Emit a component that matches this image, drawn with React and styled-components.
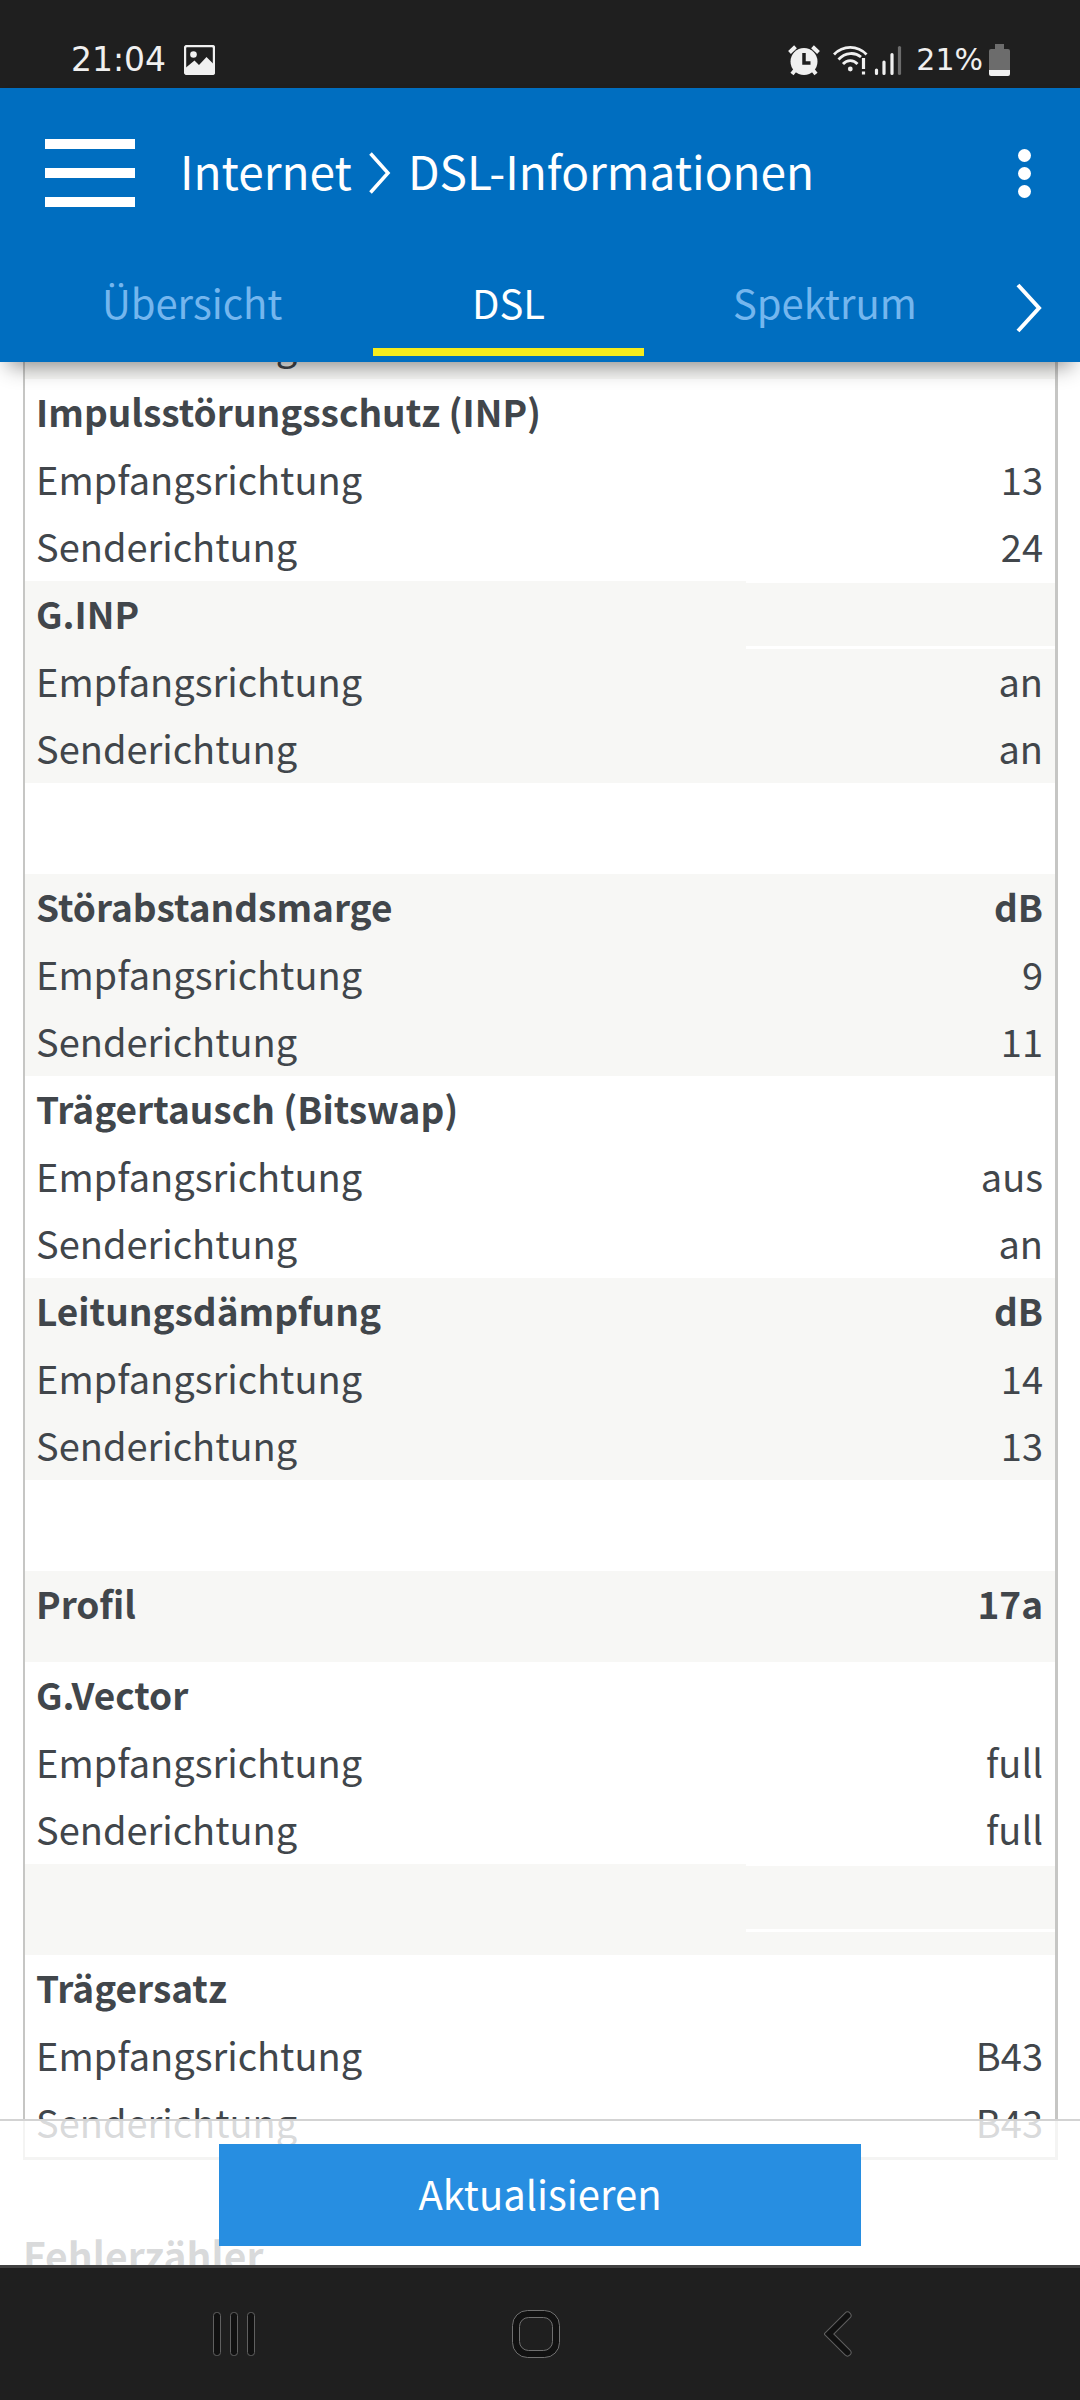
import { useLayoutEffect, useRef } from "react";
import styled, { createGlobalStyle } from "styled-components";

const GlobalStyle = createGlobalStyle`
  * {
    box-sizing: border-box;
  }

  body {
    margin: 0;
    background: #fff;
    color: #41464b;
    font-family: "Noto Sans CJK SC", "Noto Sans", sans-serif;
    font-size: 38px;
  }

  button {
    font: inherit;
    color: inherit;
    border: none;
    background: none;
    padding: 0;
    cursor: pointer;
  }
`;

const Screen = styled.div`
  display: flex;
  flex-direction: column;
  height: 100vh;
`;

// Android status bar
const StatusBar = styled.div`
  display: flex;
  justify-content: space-between;
  align-items: flex-end;
  flex-shrink: 0;
  height: 88px;
  padding: 0 70px 12px 71px;
  background: #1f1f1f;
  color: #f0f0f0;
  font-family: "DejaVu Sans", sans-serif;
  line-height: 32px;
`;

const StatusGroup = styled.div`
  display: flex;
  align-items: center;
  gap: ${(props) => props.$gap};
`;

const Clock = styled.span`
  font-size: 33px;
`;

const BatteryLevel = styled.span`
  font-size: 30px;
`;

const Header = styled.header`
  position: relative;
  z-index: 1;
  flex-shrink: 0;
  background: #006ec0;
  color: #fff;
  box-shadow: 0 12px 20px -8px rgba(0, 0, 0, 0.45);
`;

const TitleRow = styled.div`
  display: flex;
  align-items: center;
  height: 170px;
  padding: 0 49px 0 45px;
`;

const MenuButton = styled.button`
  display: flex;
  flex-direction: column;
  gap: 19px;
  width: 90px;
  margin-right: 45px;
`;

const MenuBar = styled.span`
  height: 10px;
  background: #fff;
`;

const Title = styled.h1`
  display: flex;
  align-items: center;
  gap: 17px;
  flex: 1;
  margin: 0;
  font-size: 46px;
  font-weight: 400;
  line-height: 64px;
`;

const TitleText = styled.span`
  padding-bottom: 6px;
`;

const MoreButton = styled.button`
  display: flex;
  flex-direction: column;
  gap: 5px;
`;

const Dot = styled.span`
  width: 13px;
  height: 13px;
  border-radius: 50%;
  background: #fff;
`;

const TabRow = styled.nav`
  display: flex;
  align-items: flex-end;
  height: 104px;
  padding: 0 38px 6px 34px;
`;

const Tab = styled.a`
  flex: 1;
  margin: 0 23px;
  padding-bottom: 16px;
  border-bottom: 8px solid ${(props) => (props.$active ? "#f5ec1e" : "transparent")};
  color: ${(props) => (props.$active ? "#fff" : "#74b6ee")};
  font-size: 40px;
  line-height: 60px;
  text-align: center;
  text-decoration: none;
`;

const NextButton = styled.button`
  display: flex;
  margin: 0 0 23px 33px;
`;

const Body = styled.div`
  position: relative;
  flex: 1;
  min-height: 0;
`;

const Scroller = styled.main`
  height: 100%;
  padding: 0 22px 180px 23px;
  overflow-y: auto;
  scrollbar-width: none;
`;

const Table = styled.table`
  width: 100%;
  border: 3px solid #c6c6c4;
  border-top: none;
  border-left-width: 2px;
  border-spacing: 0;
  table-layout: fixed;
`;

const Group = styled.tbody`
  background: ${(props) => (props.$shaded ? "#f7f7f5" : "#fff")};
`;

const Label = styled.th`
  width: 70%;
  height: ${(props) => props.$height};
  padding: 0 11px;
  font-size: ${(props) => (props.$bold ? "37px" : "38px")};
  font-weight: ${(props) => (props.$bold ? 600 : 400)};
  line-height: 64px;
  text-align: left;
  vertical-align: top;
`;

const Value = styled.td`
  padding: 0;
  font-size: ${(props) => (props.$bold ? "37px" : "38px")};
  font-weight: ${(props) => (props.$bold ? 600 : 400)};
  line-height: 64px;
  text-align: right;
  vertical-align: top;
`;

const ValueText = styled.div`
  padding: 0 12px;
`;

// Empty value that keeps its white lines above and below
const BlankValue = styled.div`
  height: 68px;
  border-top: 2px solid #fff;
  border-bottom: 3px solid #fff;
`;

const SectionTitle = styled.h2`
  margin: 62px 0 0;
  font-size: 39px;
  font-weight: 600;
  line-height: 64px;
`;

const Footer = styled.footer`
  position: absolute;
  right: 0;
  bottom: 0;
  left: 0;
  padding: 23px 219px 19px;
  border-top: 2px solid #d3d3d3;
  background: rgba(255, 255, 255, 0.8);
`;

const RefreshButton = styled.button`
  display: block;
  width: 100%;
  padding: 19px 0 23px;
  background: #278ee1;
  color: #fff;
  font-size: 40px;
  line-height: 60px;
`;

const NavBar = styled.div`
  display: grid;
  grid-template-columns: repeat(3, 1fr);
  align-items: center;
  justify-items: center;
  flex-shrink: 0;
  height: 135px;
  padding: 0 91px 0 83px;
  border-top: 3px solid #414141;
  background: #1f1f1f;
`;

const NavButton = styled.button`
  display: flex;
`;

const groups = [
  { shaded: true, rows: [{ label: "Senderichtung", value: "" }] },
  {
    rows: [
      { label: "Impulsstörungsschutz (INP)", value: "", bold: true },
      { label: "Empfangsrichtung", value: "13" },
      { label: "Senderichtung", value: "24" },
    ],
  },
  {
    shaded: true,
    rows: [
      { label: "G.INP", bold: true, blank: true },
      { label: "Empfangsrichtung", value: "an" },
      { label: "Senderichtung", value: "an" },
    ],
  },
  { rows: [{ label: "", value: "", tall: true }] },
  {
    shaded: true,
    rows: [
      { label: "Störabstandsmarge", value: "dB", bold: true },
      { label: "Empfangsrichtung", value: "9" },
      { label: "Senderichtung", value: "11" },
    ],
  },
  {
    rows: [
      { label: "Trägertausch (Bitswap)", value: "", bold: true },
      { label: "Empfangsrichtung", value: "aus" },
      { label: "Senderichtung", value: "an" },
    ],
  },
  {
    shaded: true,
    rows: [
      { label: "Leitungsdämpfung", value: "dB", bold: true },
      { label: "Empfangsrichtung", value: "14" },
      { label: "Senderichtung", value: "13" },
    ],
  },
  { rows: [{ label: "", value: "", tall: true }] },
  { shaded: true, rows: [{ label: "Profil", value: "17a", bold: true, tall: true }] },
  {
    rows: [
      { label: "G.Vector", value: "", bold: true },
      { label: "Empfangsrichtung", value: "full" },
      { label: "Senderichtung", value: "full" },
    ],
  },
  { shaded: true, rows: [{ label: "", blank: true, tall: true }] },
  {
    rows: [
      { label: "Trägersatz", value: "", bold: true },
      { label: "Empfangsrichtung", value: "B43" },
      { label: "Senderichtung", value: "B43" },
    ],
  },
];

function rowHeight(row) {
  if (row.tall) return "91px";
  return row.bold ? "68px" : "67px";
}

function PictureIcon() {
  return (
    <svg width="31" height="30" viewBox="0 0 31 30">
      <rect x="1" y="1" width="29" height="28" rx="2" fill="none" stroke="#f0f0f0" strokeWidth="2.4" />
      <circle cx="9.5" cy="9.5" r="3.3" fill="#f0f0f0" />
      <path d="M2 22.500L10.500 15.500L15 20L22.500 12L29 18.500V28H2z" fill="#f0f0f0" />
    </svg>
  );
}

function AlarmIcon() {
  return (
    <svg width="32" height="31" viewBox="0 0 32 31">
      <g stroke="#f0f0f0" strokeWidth="4">
        <path d="M1.500 7.500L7.500 1.800M24.500 1.800L30.500 7.500" />
        <path d="M8 24l-4 5M24 24l4 5" />
      </g>
      <circle cx="16" cy="16.500" r="13.500" fill="#f0f0f0" />
      <path d="M16 8v10h6.500" fill="none" stroke="#1f1f1f" strokeWidth="3.500" />
    </svg>
  );
}

function WifiIcon() {
  return (
    <svg width="35" height="31" viewBox="0 0 35 31" fill="none" stroke="#f0f0f0" strokeWidth="2.800">
      <path d="M1 9.500C10 0 24.500 0 33.500 9.500" />
      <path d="M5.500 14.500C12.500 7 22 7 28 12" />
      <path d="M10 19c4-4.500 10.500-4.500 14.500 0" />
      <circle cx="17.300" cy="24" r="2.400" fill="#f0f0f0" stroke="none" />
      <path d="M30.500 13v11M30.500 26.500v3" strokeWidth="3.200" />
    </svg>
  );
}

function SignalIcon() {
  return (
    <svg width="28" height="31" viewBox="0 0 28 31" strokeWidth="3.200" strokeLinecap="round">
      <path d="M2.500 25v3.500M10 17v11.500M18 9.500v19" stroke="#f0f0f0" />
      <path d="M25.500 2.500v26" stroke="#6c6c6c" />
    </svg>
  );
}

function BatteryIcon() {
  return (
    <svg width="21" height="32" viewBox="0 0 21 32">
      <path d="M6 0h9v5h4a2 2 0 0 1 2 2v19H0V7a2 2 0 0 1 2-2h4z" fill="#6c6c6c" />
      <path d="M0 26h21v4a2 2 0 0 1-2 2H2a2 2 0 0 1-2-2z" fill="#f0f0f0" />
    </svg>
  );
}

function App() {
  const scroller = useRef(null);

  // The list opens a little way down, under the header
  useLayoutEffect(() => {
    scroller.current.scrollTop = 50;
  }, []);

  return (
    <Screen>
      <GlobalStyle />
      <StatusBar>
        <StatusGroup $gap="18px">
          <Clock>21:04</Clock>
          <PictureIcon />
        </StatusGroup>
        <StatusGroup $gap="6px">
          <StatusGroup $gap="13px">
            <AlarmIcon />
            <WifiIcon />
          </StatusGroup>
          <StatusGroup $gap="14px">
            <SignalIcon />
            <BatteryLevel>21%</BatteryLevel>
          </StatusGroup>
          <BatteryIcon />
        </StatusGroup>
      </StatusBar>

      <Header>
        <TitleRow>
          <MenuButton aria-label="Menü">
            <MenuBar />
            <MenuBar />
            <MenuBar />
          </MenuButton>
          <Title>
            <TitleText>Internet</TitleText>
            <svg width="22" height="42" viewBox="0 0 22 42" fill="none" stroke="#fff" strokeWidth="3.500">
              <path d="M1.500 1.500L19 21L1.500 40.500" />
            </svg>
            <TitleText>DSL-Informationen</TitleText>
          </Title>
          <MoreButton aria-label="Mehr">
            <Dot />
            <Dot />
            <Dot />
          </MoreButton>
        </TitleRow>
        <TabRow>
          <Tab href="#uebersicht">Übersicht</Tab>
          <Tab href="#dsl" $active>
            DSL
          </Tab>
          <Tab href="#spektrum">Spektrum</Tab>
          <NextButton aria-label="Weiter">
            <svg width="26" height="50" viewBox="0 0 26 50" fill="none" stroke="#fff" strokeWidth="4">
              <path d="M2 2L23 25L2 48" />
            </svg>
          </NextButton>
        </TabRow>
      </Header>

      <Body>
        <Scroller ref={scroller}>
          <Table>
            {groups.map((group, i) => (
              <Group key={i} $shaded={group.shaded}>
                {group.rows.map((row, j) => (
                  <tr key={j}>
                    <Label scope="row" $bold={row.bold} $height={rowHeight(row)}>
                      {row.label}
                    </Label>
                    <Value $bold={row.bold}>
                      {row.blank ? <BlankValue /> : <ValueText>{row.value}</ValueText>}
                    </Value>
                  </tr>
                ))}
              </Group>
            ))}
          </Table>
          <SectionTitle>Fehlerzähler</SectionTitle>
        </Scroller>
        <Footer>
          <RefreshButton>Aktualisieren</RefreshButton>
        </Footer>
      </Body>

      <NavBar>
        <NavButton aria-label="Letzte Apps">
          <svg width="44" height="46" viewBox="0 0 44 46" fill="#111" stroke="#606060">
            <rect x="1.500" y="1.500" width="7" height="43" rx="3" />
            <rect x="18.500" y="1.500" width="7" height="43" rx="3" />
            <rect x="35.500" y="1.500" width="7" height="43" rx="3" />
          </svg>
        </NavButton>
        <NavButton aria-label="Startseite">
          <svg width="48" height="48" viewBox="0 0 48 48" fill="#111" stroke="#707070">
            <rect x="0.500" y="0.500" width="47" height="47" rx="15" />
            <rect x="7.500" y="7.500" width="33" height="33" rx="9" fill="#1f1f1f" />
          </svg>
        </NavButton>
        <NavButton aria-label="Zurück">
          <svg width="28" height="46" viewBox="0 0 28 46" fill="none" strokeLinecap="round">
            <path d="M23.500 4.500L5 23L23.500 41.500" stroke="#606060" strokeWidth="8" />
            <path d="M23.500 4.500L5 23L23.500 41.500" stroke="#111" strokeWidth="6" />
          </svg>
        </NavButton>
      </NavBar>
    </Screen>
  );
}

export default App;
